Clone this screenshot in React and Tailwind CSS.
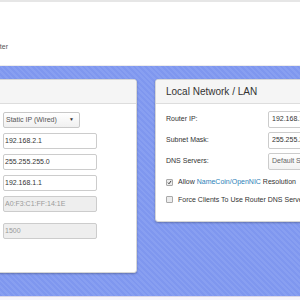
import React from 'react';

const leftRows = [
  { label: 'Connection Type:', type: 'select', value: 'Static IP (Wired)' },
  { label: 'IP Address:', value: '192.168.2.1' },
  { label: 'Subnet Mask:', value: '255.255.255.0' },
  { label: 'Gateway:', value: '192.168.1.1' },
  { label: 'MAC Address:', value: 'A0:F3:C1:FF:14:1E', disabled: true },
  { label: 'MTU:', value: '1500', disabled: true, gap: true },
];

const rightRows = [
  { label: 'Router IP:', value: '192.168.1.1' },
  { label: 'Subnet Mask:', value: '255.255.255.0' },
  { label: 'DNS Servers:', value: 'Default Servers', select: true },
];

const Checkbox = ({ checked }) => (
  <span className="w-[7px] h-[7px] shrink-0 rounded-[1px] border border-[#a9a9a9] bg-[#ececec] flex items-center justify-center">
    {checked && (
      <svg viewBox="0 0 8 8" className="w-[7px] h-[7px]">
        <path d="M1.5 4.2 L3.2 6 L6.6 1.4" fill="none" stroke="#222" strokeWidth="1.4" />
      </svg>
    )}
  </span>
);

const App = () => {
  return (
    <div className="w-[300px] h-[300px] overflow-hidden bg-white font-['Liberation_Sans',Arial,sans-serif] text-[#333]">
      {/* Top bar */}
      <header className="h-[66px] border-t-2 border-[#e6e6e6] border-b border-b-[#ececec] bg-white flex items-end pb-[14px]">
        <span className="ml-[-13px] text-[7px] leading-[8px] text-[#555]">Router</span>
      </header>

      {/* Striped content area */}
      <div className="h-[230px] bg-[repeating-linear-gradient(45deg,#7f97ef_0px,#7f97ef_2px,#889ff1_2px,#889ff1_4px)] pt-[13px]">
        <div className="flex items-start gap-[18px] ml-[-143px]">
          {/* WAN card */}
          <div className="w-[280px] h-[194px] shrink-0 bg-white border border-[#d6d6d6] rounded-[3px] shadow-[0_1px_2px_rgba(0,0,0,0.25)] overflow-hidden">
            <div className="h-[24px] bg-[#f5f5f5] border-b border-[#dddddd] px-[11px] flex items-center text-[10px]">
              Internet / WAN
            </div>
            <div className="pt-[8px] flex flex-col gap-[5px]">
              {leftRows.map((row) => (
                <div key={row.label} className={`flex items-center ${row.gap ? 'mt-[6px]' : ''}`}>
                  <span className="w-[145px] shrink-0 pl-[11px] text-[7px] text-[#333]">{row.label}</span>
                  {row.type === 'select' ? (
                    <div className="w-[77px] h-[16px] rounded-[2px] border border-[#c8c8c8] bg-[linear-gradient(#ffffff,#f0f0f0)] flex items-center justify-between pl-[2px] pr-[5px] text-[7px] text-[#555]">
                      <span>{row.value}</span>
                      <span className="text-[5px] text-[#333]">▼</span>
                    </div>
                  ) : (
                    <div
                      className={`w-[94px] h-[16px] rounded-[2px] border border-[#cccccc] flex items-center pl-[1px] text-[7px] ${
                        row.disabled ? 'bg-[#eeeeee] text-[#9a9a9a]' : 'bg-white text-[#333]'
                      }`}
                    >
                      {row.value}
                    </div>
                  )}
                </div>
              ))}
            </div>
          </div>

          {/* LAN card */}
          <div className="w-[300px] h-[143px] shrink-0 bg-white border border-[#d6d6d6] rounded-[3px] shadow-[0_1px_2px_rgba(0,0,0,0.25)] overflow-hidden">
            <div className="h-[24px] bg-[#f5f5f5] border-b border-[#dddddd] pl-[10px] flex items-center text-[10px] text-[#333]">
              Local Network / LAN
            </div>
            <div className="pt-[7px] pl-[10px] flex flex-col gap-[4px]">
              {rightRows.map((row) => (
                <div key={row.label} className="flex items-center">
                  <span className="w-[102px] shrink-0 text-[7px] text-[#333]">{row.label}</span>
                  <div
                    className={`w-[120px] h-[17px] rounded-[2px] border border-[#cccccc] flex items-center pl-[3px] text-[7px] ${
                      row.select ? 'bg-[linear-gradient(#ffffff,#f2f2f2)] text-[#666]' : 'bg-white text-[#333]'
                    }`}
                  >
                    {row.value}
                  </div>
                </div>
              ))}
              <div className="flex flex-col gap-[7px] mt-[3px]">
                <label className="flex items-center gap-[5px] text-[7px] text-[#333]">
                  <Checkbox checked />
                  <span>
                    Allow <span className="text-[#2c7fb8]">NameCoin/OpenNIC</span> Resolution
                  </span>
                </label>
                <label className="flex items-center gap-[5px] text-[7px] text-[#333] whitespace-nowrap">
                  <Checkbox />
                  <span>Force Clients To Use Router DNS Servers</span>
                </label>
              </div>
            </div>
          </div>
        </div>
      </div>

      {/* Footer strip */}
      <footer className="h-[4px] bg-[#f7f5fb] border-t border-[#d9d6e8]" />
    </div>
  );
};

export default App;
